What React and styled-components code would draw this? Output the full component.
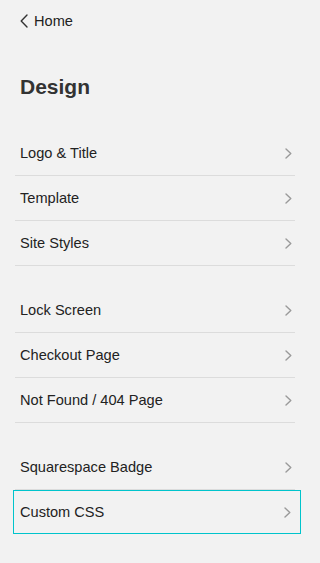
import React from "react";
import styled, { createGlobalStyle } from "styled-components";

const Global = createGlobalStyle`
  html, body { margin: 0; padding: 0; background: #f2f2f2; }
  body { font-family: "Liberation Sans", Arial, sans-serif; -webkit-font-smoothing: antialiased; }
`;

const Page = styled.div`
  box-sizing: border-box;
  width: 314px;
  min-height: 563px;
  padding: 0 19px 0 15px;
  background: #f2f2f2;
  color: #222;
`;

const BackLink = styled.a`
  display: flex;
  align-items: center;
  gap: 6px;
  margin-top: 10px;
  height: 22px;
  padding-left: 5px;
  font-size: 14.6px;
  color: #222;
  text-decoration: none;
`;

const Title = styled.h1`
  margin: 41px 0 0;
  padding-left: 5px;
  height: 28px;
  line-height: 28px;
  font-size: 21px;
  font-weight: 700;
  color: #333;
`;

const Group = styled.div`
  margin-top: ${(p) => p.$gap}px;
  display: flex;
  flex-direction: column;
`;

const Row = styled.div`
  box-sizing: border-box;
  display: flex;
  align-items: center;
  justify-content: space-between;
  height: ${(p) => (p.$focused ? 44 : 45)}px;
  padding: 0 3px 0 5px;
  font-size: 14.6px;
  color: #222;
  border-bottom: 1px solid #dcdcdc;
  ${(p) =>
    p.$focused &&
    `
    border: 1px solid #00c4cc;
    margin: 0 -6px 0 -2px;
    padding: 0 9px 0 6px;
  `}
`;

const Chevron = ({ color = "#9a9a9a", w = 7, h = 11, sw = 1.4 }) => (
  <svg width={w} height={h} viewBox={`0 0 ${w} ${h}`} fill="none">
    <path
      d={`M1 1 L${w - 1.2} ${h / 2} L1 ${h - 1}`}
      stroke={color}
      strokeWidth={sw}
      strokeLinecap="round"
      strokeLinejoin="round"
    />
  </svg>
);

const BackChevron = () => (
  <svg width="8" height="14" viewBox="0 0 8 14" fill="none">
    <path d="M7 1 L1.2 7 L7 13" stroke="#333" strokeWidth="1.4" strokeLinecap="round" strokeLinejoin="round" />
  </svg>
);

const groups = [
  { gap: 30, items: ["Logo & Title", "Template", "Site Styles"] },
  { gap: 22, items: ["Lock Screen", "Checkout Page", "Not Found / 404 Page"] },
  { gap: 22, items: ["Squarespace Badge", "Custom CSS"] },
];

export default function App() {
  return (
    <>
      <Global />
      <Page>
        <BackLink href="#">
          <BackChevron />
          Home
        </BackLink>
        <Title>Design</Title>
        {groups.map((g, gi) => (
          <Group key={gi} $gap={g.gap}>
            {g.items.map((it) => (
              <Row key={it} $focused={it === "Custom CSS"}>
                <span>{it}</span>
                <Chevron />
              </Row>
            ))}
          </Group>
        ))}
      </Page>
    </>
  );
}
